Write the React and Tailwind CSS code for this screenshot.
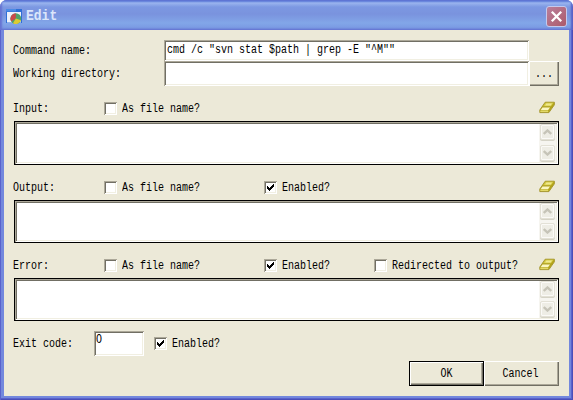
import React from 'react';

const SUNKEN =
  'bg-white shadow-[inset_1px_1px_0_#aca899,inset_-1px_-1px_0_#ffffff,inset_2px_2px_0_#716f64,inset_-2px_-2px_0_#f1efe2]';
const RAISED =
  'bg-[#ece9d8] shadow-[inset_1px_1px_0_#ffffff,inset_-1px_-1px_0_#716f64,inset_-2px_-2px_0_#aca899]';

function Text({ children, className = '' }) {
  return (
    <span className={`mt-[2px] block origin-center scale-y-[1.2] whitespace-pre leading-[12px] ${className}`}>
      {children}
    </span>
  );
}

function Check({ label, checked, className = '' }) {
  return (
    <div className={`flex h-[15px] shrink-0 items-center gap-[5px] ${className}`}>
      <span className={`block size-[13px] shrink-0 ${SUNKEN}`}>
        {checked && (
          <svg width="13" height="13" shapeRendering="crispEdges" className="block">
            <path
              d="M3 5h1v3H3zM4 6h1v3H4zM5 7h1v3H5zM6 6h1v3H6zM7 5h1v3H7zM8 4h1v3H8zM9 3h1v3H9z"
              fill="#000"
            />
          </svg>
        )}
      </span>
      <Text>{label}</Text>
    </div>
  );
}

function Eraser() {
  return (
    <svg width="16" height="13" viewBox="0 0 16 13" className="ml-auto block shrink-0">
      <path d="M6.2 1.2h9.2v2.6L9.9 11.6H.8V9z" fill="#b3a41a" stroke="#a3942a" strokeWidth=".9" strokeLinejoin="round" />
      <path d="M6.6 1.7h8L11.8 5.6H3.8z" fill="#d6cc48" />
      <path d="M7.4 2.5h5.6l-1.3 2H6z" fill="#efe98f" />
      <path d="M3.6 6.2h7.6L9 9.2H1.6z" fill="#faf6c0" />
      <path d="M1.3 9.8h7.9v1.3H1.3z" fill="#e3d968" />
      <path d="M3.4 5.9h8.2" stroke="#a7981d" strokeWidth=".7" fill="none" />
    </svg>
  );
}

function ScrollButton({ down }) {
  return (
    <span className="flex h-4 w-[15px] items-center justify-center rounded-[2px] border border-[#e3e1d6] bg-[#eeede5] shadow-[inset_0_0_0_1px_#fbfaf7,0_1px_0_#d5d3c6]">
      <svg width="9" height="6" viewBox="0 0 9 6" className="block">
        <path d={down ? 'M.8 1l3.7 3.5L8.2 1' : 'M.8 5l3.7-3.5L8.2 5'} fill="none" stroke="#c6c4b8" strokeWidth="2.4" />
      </svg>
    </span>
  );
}

function Area({ className }) {
  return (
    <div className={`border border-black ${className}`}>
      <div className={`flex h-full justify-end p-[2px] ${SUNKEN}`}>
        <div className="flex w-[17px] flex-col items-center justify-between bg-[#f6f5f0] pb-[1px]">
          <ScrollButton />
          <ScrollButton down />
        </div>
      </div>
    </div>
  );
}

function Header({ label, children }) {
  return (
    <div className="mt-[15px] mb-1 flex h-4 items-start pr-1">
      <div className="flex h-[15px] w-[90px] shrink-0 items-center">
        <Text className="-ml-px">{label}</Text>
      </div>
      {children}
      <Eraser />
    </div>
  );
}

function TitleBar() {
  return (
    <div className="flex h-[30px] shrink-0 items-center bg-[linear-gradient(to_bottom,#5f80dc_0,#5f80dc_1px,#9ab4ee_3px,#7c98e2_7px,#7a93de_14px,#82a6e8_23px,#7c9ce4_27px,#6c83da_30px)] pt-[3px] pr-[6px] pl-[6px] shadow-[inset_2px_0_2px_#6673d2,inset_-2px_0_2px_#5660c6]">
      <svg width="16" height="16" viewBox="0 0 16 16" className="block">
        <path d="M0 0h16v14H0z" fill="#2f6fd6" />
        <path d="M1 3h14v10.5H1z" fill="#eef1fb" />
        <path d="M0 0h10v2.5H0z" fill="#4c8be6" />
        <circle cx="9.8" cy="9.6" r="5.4" fill="#4fa468" />
        <path d="M9.8 9.6V4.2a5.4 5.4 0 0 0-4.6 8.2z" fill="#c94a4c" />
        <path d="M9.8 9.6l-2.8 4.6a5.4 5.4 0 0 0 8-3z" fill="#dccb32" />
      </svg>
      <span className="ml-1 block scale-y-110 text-[13px] leading-4 font-bold text-[#dbe6fb]">Edit</span>
      <span className="ml-auto flex size-[21px] items-center justify-center rounded-[3px] border border-[#c5c9ec] bg-linear-to-br from-[#b97f9c] to-[#ac5a6a]">
        <svg width="13" height="13" viewBox="0 0 13 13" className="block">
          <path d="M1.8 1.8l9.4 9.4M11.2 1.8l-9.4 9.4" stroke="#fff" strokeWidth="2.3" />
        </svg>
      </span>
    </div>
  );
}

export default function App() {
  return (
    <div className="h-[400px] w-[573px] overflow-hidden bg-white font-['Liberation_Mono','Courier_New',monospace] text-[10px] text-black">
      <div className="flex h-full flex-col overflow-hidden rounded-t-[7px] bg-[#5a63ca]">
        <TitleBar />
        <div className="flex grow bg-[#7388dd] px-1 pb-1 shadow-[inset_1px_0_0_#5a63cc,inset_-1px_-1px_0_#4a4fb8,inset_-2px_-2px_0_#5a63cc]">
          <div className="flex w-full flex-col bg-[#ece9d8] px-[10px] pt-[10px]">
            <div className="flex h-[21px]">
              <div className="flex w-[150px] items-center">
                <Text className="-ml-px">Command name:</Text>
              </div>
              <div className={`flex w-[365px] items-center pb-[2px] pl-[3px] ${SUNKEN}`}>
                <Text>{'cmd /c "svn stat $path | grep -E "^M""'}</Text>
              </div>
            </div>
            <div className="flex h-[25px]">
              <div className="flex w-[150px] items-center">
                <Text className="-ml-px">Working directory:</Text>
              </div>
              <div className={`w-[365px] ${SUNKEN}`} />
              <div className={`flex w-[30px] items-center justify-center ${RAISED}`}>
                <Text>...</Text>
              </div>
            </div>

            <Header label="Input:">
              <Check label="As file name?" />
            </Header>
            <Area className="h-[44px]" />

            <Header label="Output:">
              <Check label="As file name?" className="w-[160px]" />
              <Check label="Enabled?" checked />
            </Header>
            <Area className="h-[43px]" />

            <Header label="Error:">
              <Check label="As file name?" className="w-[160px]" />
              <Check label="Enabled?" checked className="w-[110px]" />
              <Check label="Redirected to output?" />
            </Header>
            <Area className="h-[43px]" />

            <div className="mt-[10px] flex h-[25px] items-center">
              <Text className="-ml-px w-[81px]">Exit code:</Text>
              <div className={`flex h-[25px] w-[50px] items-start pt-[2px] pl-[2px] ${SUNKEN}`}>
                <Text>O</Text>
              </div>
              <Check label="Enabled?" checked className="ml-[10px]" />
            </div>

            <div className="mt-[5px] flex h-[25px] justify-end">
              <div className="w-[75px] border border-black">
                <div className={`flex h-full items-center justify-center ${RAISED}`}>
                  <Text>OK</Text>
                </div>
              </div>
              <div className={`flex w-[75px] items-center justify-center pr-[2px] ${RAISED}`}>
                <Text>Cancel</Text>
              </div>
            </div>
          </div>
        </div>
      </div>
    </div>
  );
}
